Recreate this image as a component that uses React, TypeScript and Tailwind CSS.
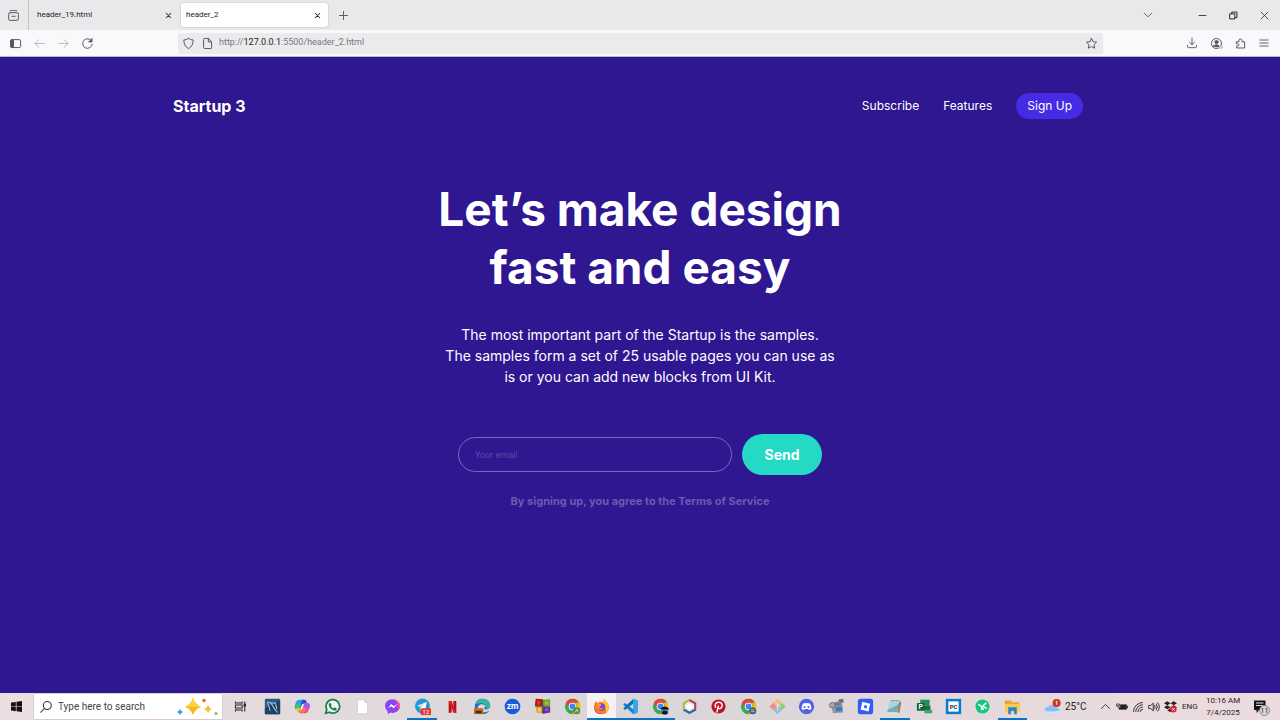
import type { ReactNode } from "react";

const stroke = {
  fill: "none",
  stroke: "currentColor",
  strokeWidth: 1.2,
  strokeLinecap: "round" as const,
  strokeLinejoin: "round" as const,
};

function Glyph({ children, className = "size-3" }: { children: ReactNode; className?: string }) {
  return (
    <svg viewBox="0 0 16 16" className={className} aria-hidden="true" {...stroke}>
      {children}
    </svg>
  );
}

function CloseMark() {
  return (
    <Glyph className="size-[9px]">
      <path d="M4 4l8 8M12 4L4 12" strokeWidth="1.800" stroke="#333" />
    </Glyph>
  );
}

function TabStrip() {
  return (
    <div className="flex h-[30px] items-center bg-[#e9e9eb] text-[#5b5b61]">
      <button aria-label="Firefox View" className="flex h-full w-[29px] items-center justify-center border-r border-[#c4c4c9] pr-[2px]">
        <Glyph className="size-[13px]">
          <path d="M4 2h8" />
          <rect x="2" y="4.5" width="12" height="9.5" rx="1.8" />
          <path d="M6 9h4" />
        </Glyph>
      </button>
      <div className="flex h-6 w-[150px] items-center justify-between pr-[6px] pl-2">
        <span className="text-[8px] text-[#1c1c20]">header_19.html</span>
        <button aria-label="Close header_19.html"><CloseMark /></button>
      </div>
      <div className="ml-[2px] flex h-6 w-[147px] items-center justify-between rounded-[3px] bg-white pr-[6px] pl-[5px] shadow-[0_0_2px_rgba(0,0,0,0.25)]">
        <span className="text-[8px] text-[#1c1c20]">header_2</span>
        <button aria-label="Close header_2"><CloseMark /></button>
      </div>
      <button aria-label="New tab" className="ml-[9px]">
        <Glyph className="size-[13px]"><path d="M8 3v10M3 8h10" /></Glyph>
      </button>
      <div className="ml-auto flex items-center pr-[10px]">
        <button aria-label="List all tabs" className="mr-[43px]">
          <Glyph><path d="M3 5.500l5 5 5-5" /></Glyph>
        </button>
        <button aria-label="Minimize" className="mr-5">
          <Glyph className="size-[11px]"><path d="M3 8h10" stroke="#222" /></Glyph>
        </button>
        <button aria-label="Restore" className="mr-5">
          <Glyph className="size-[11px]">
            <rect x="3" y="5.500" width="7" height="7.500" stroke="#222" strokeWidth="1.400" />
            <path d="M5.500 5V3h7.500v8h-2.500" stroke="#222" strokeWidth="1.400" />
          </Glyph>
        </button>
        <button aria-label="Close window">
          <Glyph className="size-[11px]"><path d="M3 3l10 10M13 3L3 13" stroke="#333" /></Glyph>
        </button>
      </div>
    </div>
  );
}

function Toolbar() {
  return (
    <div className="flex h-[27px] items-center border-b border-[#b9b4d6] bg-[#f9f9fb] pl-[9px] text-[#55555b]">
      <div className="flex w-[169px] items-center gap-[11px]">
        <button aria-label="Sidebar">
          <Glyph className="size-[13px]">
            <rect x="2" y="3.200" width="12.300" height="9.800" rx="1.400" />
            <path d="M2.500 4h3v8.200h-3z" fill="currentColor" />
          </Glyph>
        </button>
        <button aria-label="Back" className="text-[#b8b8bd]">
          <Glyph className="size-[13px]"><path d="M14 8H2.500M7 3.500L2.500 8 7 12.500" /></Glyph>
        </button>
        <button aria-label="Forward" className="text-[#b8b8bd]">
          <Glyph className="size-[13px]"><path d="M2 8h11.500M9 3.500L13.500 8 9 12.500" /></Glyph>
        </button>
        <button aria-label="Reload">
          <Glyph className="size-[13px]">
            <path d="M13.800 9A5.900 5.900 0 1 1 12.500 4.200" />
            <path d="M13.800 1.800v4.500H9.300z" fill="currentColor" strokeWidth=".6" />
          </Glyph>
        </button>
      </div>
      <div className="flex h-[21px] min-w-0 flex-1 items-center rounded-[2px] bg-[#ebebee] pr-[5px] pl-1">
        <Glyph className="size-[13px] shrink-0">
          <path d="M8 1.800c1.800 1.200 3.700 1.700 5.700 1.800 0 5-1.500 8.500-5.700 10.600C3.800 12.100 2.300 8.600 2.300 3.600 4.300 3.500 6.200 3 8 1.800z" />
        </Glyph>
        <Glyph className="ml-[6px] size-[13px] shrink-0">
          <path d="M3.200 2.800q0-1 1-1H9L13 6v7.200q0 1-1 1H4.200q-1 0-1-1zM9 1.800V6h4" />
        </Glyph>
        <span className="ml-[5px] text-[9px] whitespace-nowrap text-[#77777d]">
          http://<span className="text-[#1c1c20]">127.0.0.1</span>:5500/header_2.html
        </span>
        <button aria-label="Bookmark this page" className="ml-auto">
          <Glyph className="size-[13px]">
            <path d="M8 1.700l1.900 4 4.400.6-3.200 3.100.8 4.400L8 11.700l-3.900 2.100.8-4.400L1.700 6.300l4.400-.6z" />
          </Glyph>
        </button>
      </div>
      <div className="ml-[83px] flex items-center gap-3 pr-[10px]">
        <button aria-label="Downloads">
          <Glyph><path d="M8 1.500v8.500M4.500 6.800L8 10.200l3.500-3.400M2 11v2q0 1.200 1.200 1.200h9.600q1.200 0 1.200-1.200v-2" /></Glyph>
        </button>
        <button aria-label="Account">
          <Glyph className="size-[13px]">
            <circle cx="8" cy="8" r="6.200" />
            <circle cx="8" cy="6.200" r="2" fill="currentColor" />
            <path d="M4.500 11q3.500-3 7 0-3.500 2.600-7 0z" fill="currentColor" />
            <circle cx="13.500" cy="12.500" r="1.800" fill="#ddd" stroke="#aaa" strokeWidth=".7" />
          </Glyph>
        </button>
        <button aria-label="Extensions">
          <Glyph className="size-[11px]">
            <path d="M2.500 5.500h3.300V3.500a2.200 2.200 0 0 1 4.400 0v2H14v9H2.500v-3H4a1.600 1.600 0 0 0 0-3.200H2.500z" strokeWidth="1.400" />
          </Glyph>
        </button>
        <button aria-label="Application menu">
          <Glyph><path d="M2.500 4h11M2.500 8h11M2.500 12h11" /></Glyph>
        </button>
      </div>
    </div>
  );
}

function Landing() {
  return (
    <main className="flex-1 bg-[#2e1791] font-['Inter','Liberation_Sans',sans-serif] text-white">
      <header className="flex items-center justify-between pt-9 pr-[197px] pl-[173px]">
        <a href="#home" className="text-[16px] leading-[26px] font-bold">Startup 3</a>
        <nav className="flex items-center gap-6 text-[12px] leading-[26px]">
          <a href="#subscribe">Subscribe</a>
          <a href="#features">Features</a>
          <a href="#signup" className="rounded-full bg-[#462be5] px-[11px]">Sign Up</a>
        </nav>
      </header>
      <section className="flex flex-col items-center pt-[61px] text-center">
        <h1 className="text-[46px] leading-[58px] font-bold">
          Let’s make design
          <br />
          fast and easy
        </h1>
        <p className="mt-7 text-[14px] leading-[21px]">
          The most important part of the Startup is the samples.
          <br />
          The samples form a set of 25 usable pages you can use as
          <br />
          is or you can add new blocks from UI Kit.
        </p>
        <form className="mt-[47px] flex items-center gap-[10px]" onSubmit={(e) => e.preventDefault()}>
          <input
            type="email"
            aria-label="Your email"
            placeholder="Your email"
            className="h-[35px] w-[274px] rounded-full border border-[#7a68bd] bg-transparent px-4 font-['Roboto',sans-serif] text-[9px] outline-none placeholder:text-[#5f4bab]"
          />
          <button className="h-[41px] w-20 rounded-full bg-[#25dac5] text-[14px] font-bold">Send</button>
        </form>
        <p className="mt-[17px] text-[11px] leading-[18px] font-bold text-[#6d59b2]">
          By signing up, you agree to the Terms of Service
        </p>
      </section>
    </main>
  );
}

function ChromeLogo({ badge }: { badge: ReactNode }) {
  return (
    <>
      <circle cx="10" cy="10" r="9" fill="#34a853" />
      <path d="M2.200 5.500A9 9 0 0 1 17.800 5.500H10a4.500 4.500 0 0 0-4 6.500z" fill="#ea4335" />
      <path d="M17.800 5.500A9 9 0 0 1 9.500 19L14 12a4.500 4.500 0 0 0-1-6.500z" fill="#fbbc05" />
      <circle cx="10" cy="10" r="4.500" fill="#fff" />
      <circle cx="10" cy="10" r="3.500" fill="#4285f4" />
      {badge}
    </>
  );
}

type TaskItem = { name: string; open?: boolean; active?: boolean; art: ReactNode };

const tasks: TaskItem[] = [
  {
    name: "Task View",
    art: (
      <g fill="none" stroke="#222" strokeWidth="1.200">
        <path d="M4 4v2h8V4M4 16v-2h8v2M4 8.200h8v3.600H4zM15 4v12" />
        <path d="M14.300 7.500h1.500v2h-1.500z" fill="#222" />
      </g>
    ),
  },
  {
    name: "MySQL Workbench",
    art: (
      <>
        <rect x="1" y="1" width="18" height="18" rx="1.500" fill="#285a82" />
        <path d="M1 12L19 3v16H1z" fill="#1d4262" />
        <path d="M4 5c4-1 6 3 7.500 6.500S15 15 16 17M4 5c1 2 0 3 2 5l1 5M7.500 6h6l1.500 7" fill="none" stroke="#a9cade" strokeWidth="1.200" />
      </>
    ),
  },
  {
    name: "Copilot",
    art: (
      <>
        <path d="M7 2h5c2 0 2.500 1.500 3 3l-4 1-3 8-6-1C0 12 1 9 2 6s2-4 5-4z" fill="#269de8" />
        <path d="M2 7l6-1-2 8H3c-3-1-2-4-1-7z" fill="#42bf75" />
        <path d="M2.500 12H8l-1.500 4C4 16 2 15 2.500 12z" fill="#f6c52b" />
        <path d="M12 2c3 0 2 4 4 4-4-1-6 1-7 4L8 8l1-4c.5-1.500 1-2 3-2z" fill="#2850d3" />
        <path d="M12 6h4c3 0 3 3 2 6s-2 6-5 6H8c-2 0-2.500-1.500-3-3h3c2 0 2-2 3-5z" fill="#e94f98" />
        <path d="M5 15h3c2 0 2-2 3-4l3 2c-1 3-2 5-5 5-3 0-3-1-4-3z" fill="#fb7843" />
        <path d="M12 6h4c3 0 3 3 2 6l-6-1-1-2z" fill="#a65bea" />
        <path d="M9.500 7h2l-1.800 6h-2z" fill="#f4e8ee" />
      </>
    ),
  },
  {
    name: "WhatsApp",
    art: (
      <>
        <path d="M2 18l1.300-4.500A8 8 0 1 1 6.500 16.800z" fill="#f2f4ef" stroke="#17804a" strokeWidth="2" />
        <path d="M7.500 5.500l1.500 2.800-1 1.200c.8 1.500 1.800 2.300 3.200 2.900l1.300-1.400 2.500 1.300c0 2-1.500 2.700-3 2.500C8.500 14 6 11 5.600 8.500c-.1-1.500.6-2.800 1.900-3z" fill="#17804a" />
      </>
    ),
  },
  {
    name: "Document",
    art: (
      <>
        <path d="M4 2h9l3 3v13.500H4z" fill="#fff" stroke="#c9c4c4" strokeWidth=".8" />
        <path d="M13 2v3h3" fill="#ddd" stroke="#bbb" strokeWidth=".8" />
      </>
    ),
  },
  {
    name: "Messenger",
    art: (
      <>
        <path d="M10 1.500c5 0 8.800 3.500 8.800 8s-3.800 8-8.800 8l-2.500-.3L4.500 19l-.2-3.500A7.700 7.700 0 0 1 1.200 9.500c0-4.500 3.800-8 8.800-8z" fill="#8b43f6" />
        <path d="M12 1.700c4 .8 6.800 4 6.800 7.800 0 2-1 4-2.500 5.500C17 9 15 5 12 1.700z" fill="#f0579b" />
        <path d="M4.500 12l4-4.800 3 2.500 4-2.500-4 5-3-2.500z" fill="#fff" />
      </>
    ),
  },
  {
    name: "Telegram",
    open: true,
    art: (
      <>
        <circle cx="10" cy="9.500" r="8.800" fill="#2798d3" />
        <path d="M4 9.200l11-4.400-2 10.200-3.500-2.500-1.800 2-.4-3.500 5-4.200-6 3.600z" fill="#fff" />
        <rect x="8" y="12" width="12" height="8" rx="1" fill="#e7342d" />
        <text x="14" y="18.500" textAnchor="middle" fontSize="7" fill="#fff">12</text>
      </>
    ),
  },
  {
    name: "Netflix",
    art: (
      <>
        <path d="M5.500 3.500H9v13.500l-3.500.5zM11 3.500h3.500v14l-3.500-.5z" fill="#b2101b" />
        <path d="M5.500 3.500H9l5.500 14-3.500-.5z" fill="#e31924" />
      </>
    ),
  },
  {
    name: "Edge",
    art: (
      <>
        <path d="M1 11C1 4 5 1 10 1c6 0 9 4 9 8 0 3-2 4.500-5 4.500s-2-2 0-4C9 5 4 8 4 13c0 3 3 6 7 6C5 19.500 1 16 1 11z" fill="#1473c7" />
        <path d="M2 7c2-8 16-8 17 2 0 3-2 4.500-5 4.500 3-5-3-9-12-6.500z" fill="#36b9a3" />
        <path d="M4 12c1 6 8 6 14 3-3 5-12 6-14-3z" fill="#146bc1" />
        <path d="M0 12h11v7H0z" fill="#bd721b" />
        <path d="M2 15h7v3H2z" fill="#482e21" />
      </>
    ),
  },
  {
    name: "Zoom",
    art: (
      <>
        <circle cx="10" cy="10" r="9.200" fill="#175ddb" />
        <text x="10" y="13.300" textAnchor="middle" fontSize="10" fontWeight="700" fill="#fff">zm</text>
      </>
    ),
  },
  {
    name: "Media tool",
    art: (
      <>
        <path d="M2 1l8 .5v8L1 9z" fill="#a51717" />
        <path d="M10.500 2L19 1.500V9l-8.500.5z" fill="#6fa925" />
        <path d="M2 10l8 .5V18l-7-1z" fill="#d9a727" />
        <path d="M10.500 10.500H19V17l-8.500 1.500z" fill="#672b9e" />
        <path d="M3.500 3h4v5h-4z" fill="#df312b" />
        <path d="M12.500 4H17v4h-4.500z" fill="#91c13f" />
        <path d="M4.500 12H8v4H5z" fill="#f0d45f" />
        <path d="M13 12h4v3.500h-4z" fill="#8f54bf" />
        <path d="M10.200 1.500v17M1.500 9.800H19" stroke="#2b2327" strokeWidth=".8" />
      </>
    ),
  },
  {
    name: "Chrome",
    art: (
      <ChromeLogo
        badge={
          <>
            <circle cx="15" cy="15" r="4.200" fill="#5d8b3c" />
            <path d="M13.300 17l1.700-4 1.700 4" fill="none" stroke="#dbe6c9" />
          </>
        }
      />
    ),
  },
  {
    name: "Firefox",
    open: true,
    active: true,
    art: (
      <>
        <path d="M1.500 8L3 3.500 5 6l3-1.500L11.500 5 13 1c1 2 3 3 4.500 5.500 3 5 0 12.500-7 12.500S0 14 1.500 8z" fill="#ff7b28" />
        <path d="M13 1c1 2 3 3 4.500 5.500 2 4 1 8-2 10.500 0-6-1-9-4-12z" fill="#ffca31" />
        <path d="M2 11c0 5 5 8 10 7.500-5 1.500-11-1-10.500-8z" fill="#ef334e" />
        <circle cx="10" cy="10.800" r="4.300" fill="#7542df" />
        <path d="M5 7c2-1 4 0 5 1l-1 2H7c1 3 4 3 6 1-1 4-8 5-8-4z" fill="#ff9c25" />
      </>
    ),
  },
  {
    name: "Visual Studio Code",
    open: true,
    art: (
      <>
        <path d="M13.500 1l5 2.300v13.400l-5 2.300L1.500 7.800 3.500 6 13.500 13.500z" fill="#1684cc" />
        <path d="M13.500 1L1.500 12.200l2 1.800L13.500 6.500z" fill="#0872b9" />
        <path d="M13.500 1l5 2.300v13.400l-5 2.300z" fill="#35a7ec" />
      </>
    ),
  },
  {
    name: "Chrome profile",
    open: true,
    art: (
      <ChromeLogo
        badge={
          <>
            <circle cx="15" cy="15" r="4.500" fill="#5790ce" />
            <path d="M10.500 12q4.500-4 9 0v1.500h-9zM13 15h4l2 3q-4 3-8 0z" fill="#101114" />
          </>
        }
      />
    ),
  },
  {
    name: "NetBeans",
    art: (
      <>
        <path d="M10 1l8 4.500v9L10 19l-8-4.500v-9z" fill="#f4f2f0" />
        <path d="M10 1L2 5.500v9l2.500 1.400V7L10 4z" fill="#a7ba45" />
        <path d="M10 1l8 4.500v9l-2.500 1.400V7L10 4z" fill="#b43b63" />
        <path d="M2 14.500L10 19l8-4.500-3-1.700-5 3-5-3z" fill="#2b6ea5" />
        <path d="M6 8l4-2 4 2v4l-4 2.500L6 12z" fill="#fff" stroke="#c8c8cd" strokeWidth=".6" />
      </>
    ),
  },
  {
    name: "Pinterest",
    art: (
      <>
        <circle cx="10" cy="10" r="8.300" fill="#bd1428" />
        <path d="M8 17l2-8M7 11.500C4.500 8 7 5 10.300 5 14 5 15 8 13.800 10.500c-1 2.500-3.600 2.500-4.500.8" fill="none" stroke="#fff" strokeWidth="1.700" />
      </>
    ),
  },
  {
    name: "Chrome work profile",
    art: (
      <ChromeLogo
        badge={
          <>
            <circle cx="15" cy="15" r="4.200" fill="#47616e" />
            <path d="M13 14h4M13 16h4" stroke="#b4cbd2" />
          </>
        }
      />
    ),
  },
  {
    name: "Git",
    art: (
      <>
        <path d="M10 1l4.500 4.500L10 10 5.500 5.500z" fill="#f3bd72" />
        <path d="M5 5.500L9.500 10 5 14.500.5 10z" fill="#ef8e8e" />
        <path d="M15 5.500l4.500 4.500-4.500 4.500-4.500-4.500z" fill="#8cc886" />
        <path d="M10 10l4.500 4.500L10 19l-4.500-4.500z" fill="#8abbea" />
        <path d="M7.500 5l2.500 2.500V15M10 8l4 2.500" fill="none" stroke="#f6e4d2" strokeWidth="1.200" />
      </>
    ),
  },
  {
    name: "Discord",
    art: (
      <>
        <circle cx="10" cy="10" r="9" fill="#5361e6" />
        <path d="M6 6.500q4-1.500 8 0 2 3 1.800 6.500-1.500 1-3 1.200l-.8-1.200H8l-.8 1.200Q5.700 14 4.200 13 4 9.500 6 6.500z" fill="#fff" />
        <circle cx="7.700" cy="10.500" r="1.200" fill="#5361e6" />
        <circle cx="12.300" cy="10.500" r="1.200" fill="#5361e6" />
      </>
    ),
  },
  {
    name: "Camera",
    art: (
      <>
        <path d="M2 7l9-3 5 2v4L5 12z" fill="#777d82" />
        <path d="M4 10l13-2 1 9-12 1z" fill="#91999e" />
        <path d="M9 11l7-1 .5 5-7 1z" fill="#367dbd" />
        <circle cx="5" cy="8.500" r="3.200" fill="#a8adaf" stroke="#62686c" />
        <path d="M12 2l6-1v5l-5-1z" fill="#626c73" />
      </>
    ),
  },
  {
    name: "Roblox Studio",
    art: (
      <>
        <rect x="1" y="1" width="18" height="18" rx="3" fill="#315cf5" />
        <path d="M6.200 4.500l9.300 2.200-2 9.100-9.200-2.300z" fill="#fff" />
        <path d="M8.800 8.300l3.200.8-.8 3.200-3.100-.8z" fill="#315cf5" />
      </>
    ),
  },
  {
    name: "Notepad",
    open: true,
    art: (
      <>
        <path d="M15 3l3 2-2 12-3 1z" fill="#9c8657" />
        <path d="M6 3h10l-3 14H1z" fill="#71aebb" />
        <path d="M6 3h10l-1 4L2 14z" fill="#a9d5dc" />
        <path d="M1 17h12l2 1H2z" fill="#eee" />
        <path d="M6 3h10" stroke="#607b83" strokeDasharray="1 1" />
      </>
    ),
  },
  {
    name: "Project",
    art: (
      <>
        <path d="M5 2h11v7H5z" fill="#248d58" />
        <path d="M9 9h8v6H9z" fill="#1b6e45" />
        <path d="M10 14h9v4h-9z" fill="#2eaf6d" />
        <rect x="1" y="6" width="9" height="9" rx="1" fill="#14633e" />
        <text x="5.500" y="13.200" textAnchor="middle" fontSize="8" fontWeight="700" fill="#fff">P</text>
      </>
    ),
  },
  {
    name: "PC Manager",
    art: (
      <>
        <path d="M1 1h18v18H1z" fill="#087bd2" />
        <path d="M4 4h12v12H4z" fill="#fff" />
        <text x="10" y="12.500" textAnchor="middle" fontSize="7" fontWeight="700" fill="#172a35">PC</text>
      </>
    ),
  },
  {
    name: "Sync",
    art: (
      <>
        <circle cx="10" cy="10" r="8.300" fill="#13c780" />
        <path d="M5 7.500l2.700 1.300L11.500 14M14.500 5.500l-3.200 3L8.500 14M11.500 10.500l3.500 1.800" fill="none" stroke="#fff" strokeWidth="1.700" />
      </>
    ),
  },
  {
    name: "File Explorer",
    open: true,
    art: (
      <>
        <path d="M1 3h7l1.500 2H18v5H1z" fill="#e6a62b" />
        <path d="M1 7h18v10H1z" fill="#ffcb4d" />
        <path d="M5 11h10v8h-3v-4H8v4H5z" fill="#2682d2" />
      </>
    ),
  },
];

function Tray() {
  return (
    <div className="ml-auto flex h-full items-center text-[#252225]">
      <svg viewBox="0 0 20 20" className="size-[18px]" aria-hidden="true">
        <path d="M5 18a4 4 0 0 1-.500-8 5.500 5.500 0 0 1 10 1 3.600 3.600 0 0 1 1 7z" fill="#8fbdf2" />
        <path d="M1 14q5 2 17 0 0 4-3 4H5q-4 0-4-4z" fill="#cfe4fb" />
        <circle cx="14" cy="5.500" r="4.500" fill="#cf3724" />
        <path d="M13 4.500l1.200-1v4" fill="none" stroke="#fff" />
      </svg>
      <span className="ml-[3px] w-[35px] text-[10px]">25°C</span>
      <button aria-label="Show hidden icons">
        <Glyph className="size-[11px]"><path d="M2 11l6-6 6 6" /></Glyph>
      </button>
      <Glyph className="ml-[5px] size-3">
        <path d="M6 5h8v6H4V8.500h2z" fill="#222" strokeWidth=".8" />
        <path d="M15.300 7v2" strokeWidth="1.200" />
        <path d="M1 4h3.500v2.500H1zM2.700 6.500v2" strokeWidth="1" />
      </Glyph>
      <Glyph className="ml-1 size-3">
        <path d="M2 14A12 12 0 0 1 14 2M5 14a9 9 0 0 1 9-9M8 14a6 6 0 0 1 6-6M11 14a3 3 0 0 1 3-3" />
      </Glyph>
      <Glyph className="ml-1 size-3">
        <path d="M1.500 6h2L7 3v10l-3.500-3h-2zM9 6q1.500 2 0 4M11 4q3 4 0 8M13 2.500q4.500 5.500 0 11" />
      </Glyph>
      <svg viewBox="0 0 16 16" className="ml-1 size-[13px]" aria-hidden="true">
        <path d="M4 1.500l4 2.500-4 2.500L0 4zM12 1.500L16 4l-4 2.500L8 4zM4 6.500L8 9l-4 2.500L0 9zM12 6.500L16 9l-4 2.500L8 9zM8 10l4 2.500L8 15l-4-2.500z" fill="#222" />
        <circle cx="11.500" cy="11.500" r="4" fill="#dd2438" />
        <path d="M10 10l3 3M13 10l-3 3" stroke="#fff" />
      </svg>
      <span className="ml-[5px] w-[24px] text-[8px]">ENG</span>
      <time className="w-[34px] text-center text-[8px] leading-3 whitespace-nowrap">
        10:16 AM
        <br />
        7/4/2025
      </time>
      <button aria-label="11 notifications" className="mr-[10px] ml-3">
        <svg viewBox="0 0 18 18" className="size-[18px]">
          <path d="M2 2.500h11.500V12H7l-2.500 3v-3H2z" fill="#151515" />
          <path d="M4 5h7.500M4 7.500h7.500" stroke="#e9dcdf" />
          <circle cx="12.500" cy="12.500" r="5" fill="#ddd4d7" stroke="#777" strokeWidth=".8" />
          <text x="12.500" y="15" textAnchor="middle" fontSize="7" fill="#222">11</text>
        </svg>
      </button>
    </div>
  );
}

function Taskbar() {
  return (
    <footer className="flex h-[27px] items-center bg-linear-to-r from-[#eddfe1] via-[#d9d5d8] to-[#eddcdf]">
      <button aria-label="Start" className="flex w-[33px] shrink-0 justify-center">
        <svg viewBox="0 0 16 16" className="size-[11px]">
          <path d="M0 2.300L7 1.300v6.300H0zM8 1.100L16 0v7.600H8zM0 8.500h7v6.300l-7-1zM8 8.500h8V16l-8-1.100z" fill="#111" />
        </svg>
      </button>
      <label className="flex h-full w-[190px] shrink-0 items-center border border-[#d5cdd0] bg-white pr-1 pl-[5px]">
        <Glyph className="size-[14px] shrink-0 text-[#333]">
          <circle cx="9.500" cy="6.300" r="4.500" />
          <path d="M6.300 9.700L2 14" />
        </Glyph>
        <input
          type="search"
          aria-label="Type here to search"
          placeholder="Type here to search"
          className="ml-[5px] min-w-0 flex-1 bg-transparent text-[10px] outline-none placeholder:text-[#454545]"
        />
        <svg viewBox="0 0 42 20" className="h-5 w-[42px] shrink-0" aria-hidden="true">
          <path d="M17 1q2 6 8 9-6 2-8 8-2-6-8-8 6-3 8-9z" fill="#f5b91f" />
          <path d="M17 1q2 6 8 9H9q6-3 8-9z" fill="#ffd23e" />
          <path d="M32 8q1 3 4 4-3 1-4 4-1-3-4-4 3-1 4-4z" fill="#f8bd2c" />
          <path d="M4 12q.5 2 3 3-2.500 1-3 3-1-2-3-3 2-1 3-3z" fill="#29a5df" />
          <circle cx="28" cy="3.500" r="1.700" fill="#e76135" />
          <circle cx="40" cy="16.500" r="1.500" fill="#82bf45" />
        </svg>
      </label>
      <div className="grid h-full w-[804px] grid-cols-[34px_repeat(11,30px)_repeat(15,minmax(0,1fr))]">
        {tasks.map((task) => (
          <button
            key={task.name}
            aria-label={task.name}
            className={`flex items-center justify-center ${task.active ? "bg-[#f5f2f3]" : ""} border-b-2 pt-[2px] ${task.open ? "border-[#0c72c5]" : "border-transparent"}`}
          >
            <svg viewBox="0 0 20 20" className="size-[17px] shrink-0">{task.art}</svg>
          </button>
        ))}
      </div>
      <Tray />
    </footer>
  );
}

export default function App() {
  return (
    <div className="flex min-h-screen flex-col font-['Roboto','Noto_Sans',sans-serif]">
      <TabStrip />
      <Toolbar />
      <Landing />
      <Taskbar />
    </div>
  );
}
